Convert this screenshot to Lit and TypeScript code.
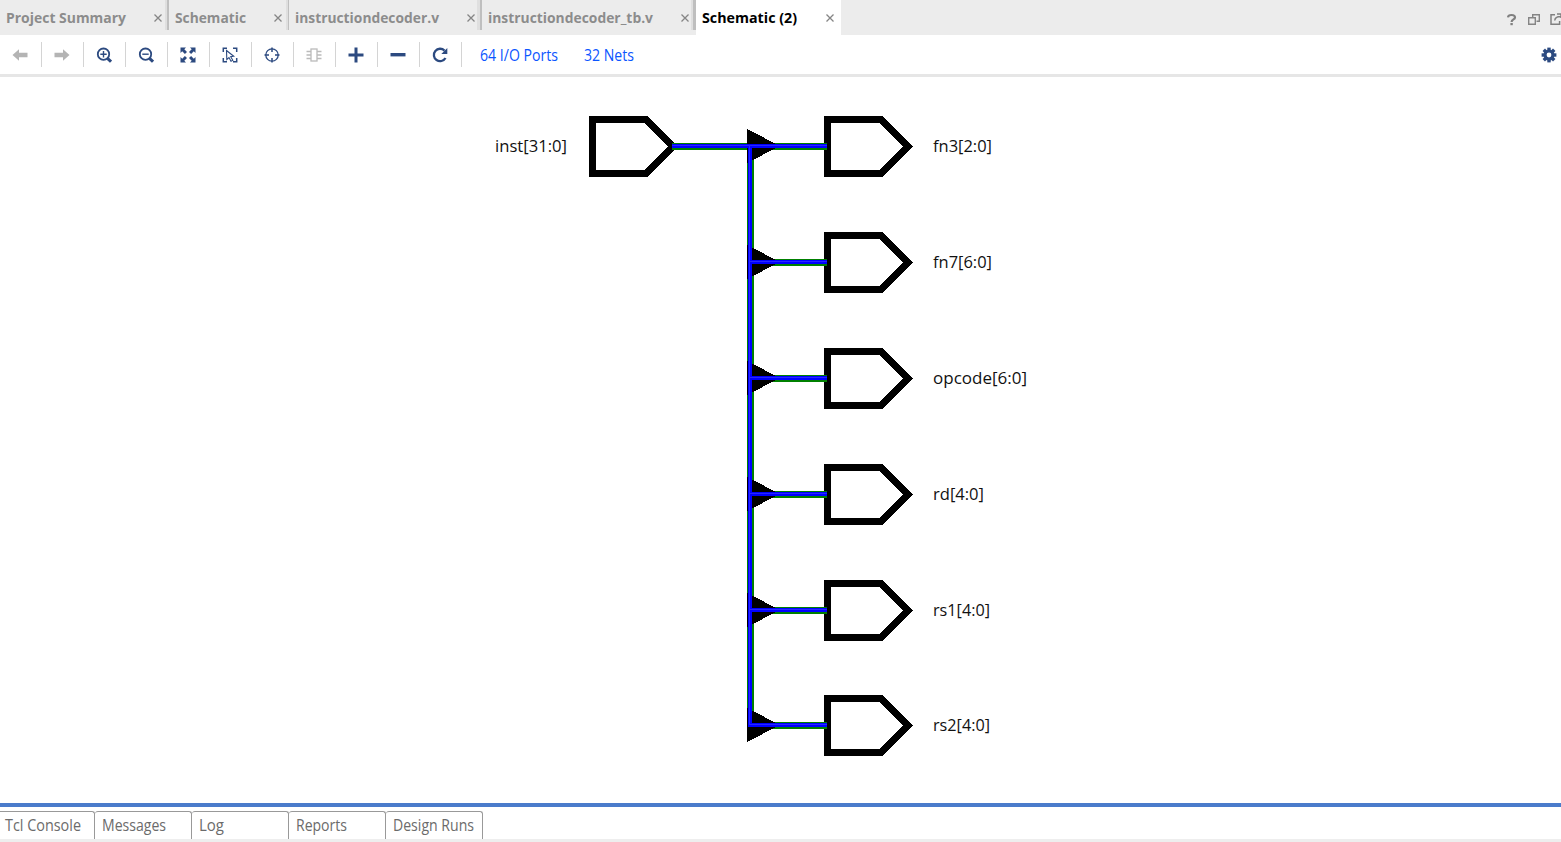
import { LitElement, html, svg, css } from "lit";
import { customElement } from "lit/decorators.js";

const NAVY = "#2c4a80";
const ROWS = [
  { label: "fn3[2:0]", dy: 0, w: 59 },
  { label: "fn7[6:0]", dy: 116, w: 59 },
  { label: "opcode[6:0]", dy: 232, w: 94 },
  { label: "rd[4:0]", dy: 348, w: 51 },
  { label: "rs1[4:0]", dy: 464, w: 57 },
  { label: "rs2[4:0]", dy: 579, w: 57 },
];
const TABS = [
  { label: "Project Summary", w: 169, pad: 6, light: 2, dark: 2, close: 153, tw: 120 },
  { label: "Schematic", w: 120, pad: 6, light: 2, dark: 1, close: 104, tw: 71 },
  { label: "instructiondecoder.v", w: 193, pad: 6, light: 3, dark: 2, close: 177, tw: 144 },
  { label: "instructiondecoder_tb.v", w: 214, pad: 6, light: 2, dark: 3, close: 198, tw: 165 },
  { label: "Schematic (2)", w: 145, pad: 6, light: 0, dark: 0, close: 129, tw: 95 },
];
const BOTTOM = [
  { label: "Tcl Console", w: 95, pad: 5, tw: 76 },
  { label: "Messages", w: 97, pad: 7, tw: 64 },
  { label: "Log", w: 97, pad: 7, tw: 25 },
  { label: "Reports", w: 97, pad: 7, tw: 51 },
  { label: "Design Runs", w: 97, pad: 7, tw: 81 },
];

const fitted = (label: string, w: number, cls: string) => html`<svg class="label ${cls}" width=${w + 4} height="22">
  <text x="0" y="16" textLength=${w} lengthAdjust="spacingAndGlyphs">${label}</text></svg>`;

const magnifier = (plus: boolean) => svg`
  <circle cx="7.5" cy="7.2" r="5.7" fill="none" stroke=${NAVY} stroke-width="1.8"/>
  <path d="M11.5 11.3L15 14.7" stroke=${NAVY} stroke-width="3"/>
  <path d=${plus ? "M4.3 7.2H10.7M7.5 4V10.4" : "M4.3 7.2H10.7"} stroke=${NAVY} stroke-width="1.4"/>`;

const ICONS = [
  svg`<path d="M.5 8L7 2.3V5.8H15.5V10.2H7V13.7Z" fill="#b4b4b4"/>`,
  svg`<path d="M15.5 8L9 2.3V5.8H.5V10.2H9V13.7Z" fill="#b4b4b4"/>`,
  magnifier(true),
  magnifier(false),
  svg`<path d="M.5.5H6L4.3 2.2L7 4.9L4.9 7L2.2 4.3L.5 6ZM15.5.5V6L13.8 4.3L11.1 7L9 4.9L11.7 2.2L10 .5ZM.5 15.5V10L2.2 11.7L4.9 9L7 11.1L4.3 13.8L6 15.5ZM15.5 15.5H10L11.7 13.8L9 11.1L11.1 9L13.8 11.7L15.5 10Z" fill=${NAVY}/>`,
  svg`<path d="M1.3 5V1.3H5M11 1.3H14.7V5M14.7 11V14.7H11M5 14.7H1.3V11" fill="none" stroke=${NAVY} stroke-width="1.5"/>
      <path d="M4.5 3.5L11.7 9.2L8.7 9.7L10.8 13.2L9 14.2L7 10.6L4.8 12.5Z" fill="none" stroke=${NAVY} stroke-width="1.1"/>`,
  svg`<circle cx="8" cy="8" r="6.2" fill="none" stroke=${NAVY} stroke-width="1.3"/>
      <path d="M8 .5V5M8 11V15.5M.5 8H5M11 8H15.5" stroke=${NAVY} stroke-width="1.5"/>`,
  svg`<rect x="5" y="2" width="6" height="12" fill="none" stroke="#bbb" stroke-width="1.3"/>
      <path d="M.5 4.5H5M.5 8H5M.5 11.5H5M11 4.5H15.5M11 8H15.5M11 11.5H15.5" stroke="#bbb" stroke-width="1.3"/>`,
  svg`<path d="M.5 8H15.5M8 .5V15.5" stroke=${NAVY} stroke-width="3"/>`,
  svg`<path d="M.5 7.7H15.5" stroke=${NAVY} stroke-width="3.4"/>`,
  svg`<path d="M13.5 11A6.2 6.2 0 1 1 12.5 3.6" fill="none" stroke=${NAVY} stroke-width="2.3"/>
      <path d="M15.3 1V7H9.3Z" fill=${NAVY}/>`,
];

@customElement("app-root")
export class AppRoot extends LitElement {
  static styles = css`
    :host { display: flex; flex-direction: column; width: 1561px; height: 842px; overflow: hidden;
      background: #fff; font-family: "Open Sans", "Noto Sans", sans-serif; }
    svg { display: block; flex: none; }
    .tabs { display: flex; height: 35px; flex: none; background: #ececec; }
    .tab { display: flex; box-sizing: border-box; height: 35px; flex: none; }
    .tab.active { background: #fff; }
    .body { display: flex; align-items: flex-start; padding-top: 7px; flex: 1; }
    .body .cross { margin-left: auto; margin-top: 6px; }
    .light { height: 30px; background: #dfdfdf; }
    .dark { height: 30px; background: #bfbfbf; }
    .label { overflow: visible; }
    .bold text { font-size: 15px; font-weight: 700; fill: #8c8c8c; }
    .active .bold text { fill: #000; }
    .link text { font-size: 15.6px; fill: #0a55ff; }
    .low text { font-size: 15.4px; fill: #6b6b6b; }
    .tools { display: flex; margin-left: auto; padding-top: 13px; gap: 6px; }
    .tools svg:first-child { margin-left: -1px; margin-right: 1px; }
    .toolbar { display: flex; align-items: center; height: 39px; flex: none; border-bottom: 3px solid #e6e6e6; }
    .cell { display: flex; justify-content: center; align-items: center; box-sizing: border-box;
      width: 42px; height: 25px; padding-right: 1px; border-right: 1px solid #d4d4d4; }
    .links { display: flex; gap: 22px; padding: 2px 0 0 18px; }
    .gear { margin-left: auto; margin-right: 4px; }
    .canvas { height: 726px; flex: none; }
    .canvas text { font-size: 17px; fill: #111; }
    .rule { height: 4px; flex: none; background: #4a7bcb; }
    .bottom { display: flex; height: 28px; padding-top: 4px; flex: none; }
    .btab { box-sizing: border-box; height: 28px; border: 1px solid #999; border-left-width: 0; border-bottom: 0;
      border-radius: 0 3px 0 0; padding-top: 3px; }
    .btab + .btab { border-top-left-radius: 3px; }
    .foot { height: 3px; flex: none; background: #eee; }
  `;

  private port(x: number, y: number) {
    return svg`<path fill-rule="evenodd" transform="translate(${x} ${y})"
      d="M0 0H58.5L89 30.5L58.5 61H0ZM7 7V54H55.6L79.2 30.5L55.6 7Z"/>`;
  }

  render() {
    return html`
      <div class="tabs">
        ${TABS.map((t, i) => html`<div class="tab ${i === 4 ? "active" : ""}" style="width:${t.w}px">
          <div class="body" style="padding-left:${t.pad}px">
            ${fitted(t.label, t.tw, "bold")}
            <svg class="cross" width="9" height="9" style="margin-right:${t.w - t.close - 9 - t.light - t.dark}px">
              <path d="M1.5 1.5L8.5 8.5M8.5 1.5L1.5 8.5" stroke="#858585" stroke-width="1.3"/></svg>
          </div>
          <div class="light" style="width:${t.light}px"></div>
          <div class="dark" style="width:${t.dark}px"></div>
        </div>`)}
        <div class="tools">
          <svg width="16" height="14"><path d="M3 4.3Q3.3 2 6.5 2Q10 2 10 4.4Q10 5.7 8.2 6.6Q6.7 7.4 6.6 9" fill="none" stroke="#808080" stroke-width="2.2"/><rect x="5.4" y="10" width="2.4" height="2.2" fill="#808080"/></svg>
          <svg width="16" height="14"><path d="M4.7 4.5V1.7H11.3V8.3H8.5M.7 4.7H7.3V11.3H.7Z" fill="none" stroke="#858585" stroke-width="1.4"/></svg>
          <svg width="11" height="14"><path d="M5 1.8H1V11.2H9.6V8M4.7 7.5Q5.2 3.5 10.5 3.5M7 1H11V5" fill="none" stroke="#808080" stroke-width="1.5"/></svg>
        </div>
      </div>
      <div class="toolbar">
        ${ICONS.map((icon) => html`<div class="cell"><svg width="16" height="16">${icon}</svg></div>`)}
        <div class="links">${fitted("64 I/O Ports", 78, "link")}${fitted("32 Nets", 50, "link")}</div>
        <svg class="gear" width="16" height="16">
          ${[0, 45, 90, 135].map((a) => svg`<rect x="6.3" y=".6" width="3.4" height="14.8" fill=${NAVY} transform="rotate(${a} 8 8)"/>`)}
          <circle cx="8" cy="8" r="5.5" fill=${NAVY}/><circle cx="8" cy="8" r="2.4" fill="#fff"/></svg>
      </div>
      <svg class="canvas" width="1561" height="726" viewBox="0 77 1561 726">
        <g shape-rendering="crispEdges">
          ${this.port(589, 116)}
          ${ROWS.map((r) => this.port(824, 116 + r.dy))}
          <rect x="672" y="143" width="80" height="7" fill="#008000"/>
          <rect x="747" y="147" width="7" height="578" fill="#008000"/>
          ${ROWS.map((r) => svg`<rect x="752" y=${143 + r.dy} width="75" height="7" fill="#008000"/>
            <path d="M747 ${129 + r.dy}L780 ${146 + r.dy}L747 ${163 + r.dy}Z"/>`)}
          <rect x="672" y="144" width="80" height="4" fill="#00f"/>
          <rect x="748" y="144" width="4" height="583" fill="#00f"/>
          ${ROWS.map((r) => svg`<rect x="750" y=${144 + r.dy} width="77" height="4" fill="#00f"/>
            <rect x="749" y=${145 + r.dy} width="78" height="1" fill="#2626ff"/>`)}
          <rect x="672" y="145" width="77" height="1" fill="#2626ff"/>
          <rect x="749" y="145" width="1" height="580" fill="#2626ff"/>
        </g>
        <text x="495" y="152" textLength="72" lengthAdjust="spacingAndGlyphs">inst[31:0]</text>
        ${ROWS.map((r) => svg`<text x="933" y=${152 + r.dy} textLength=${r.w} lengthAdjust="spacingAndGlyphs">${r.label}</text>`)}
      </svg>
      <div class="rule"></div>
      <div class="bottom">
        ${BOTTOM.map((b) => html`<div class="btab" style="width:${b.w}px;padding-left:${b.pad}px">${fitted(b.label, b.tw, "low")}</div>`)}
      </div>
      <div class="foot"></div>
    `;
  }
}
